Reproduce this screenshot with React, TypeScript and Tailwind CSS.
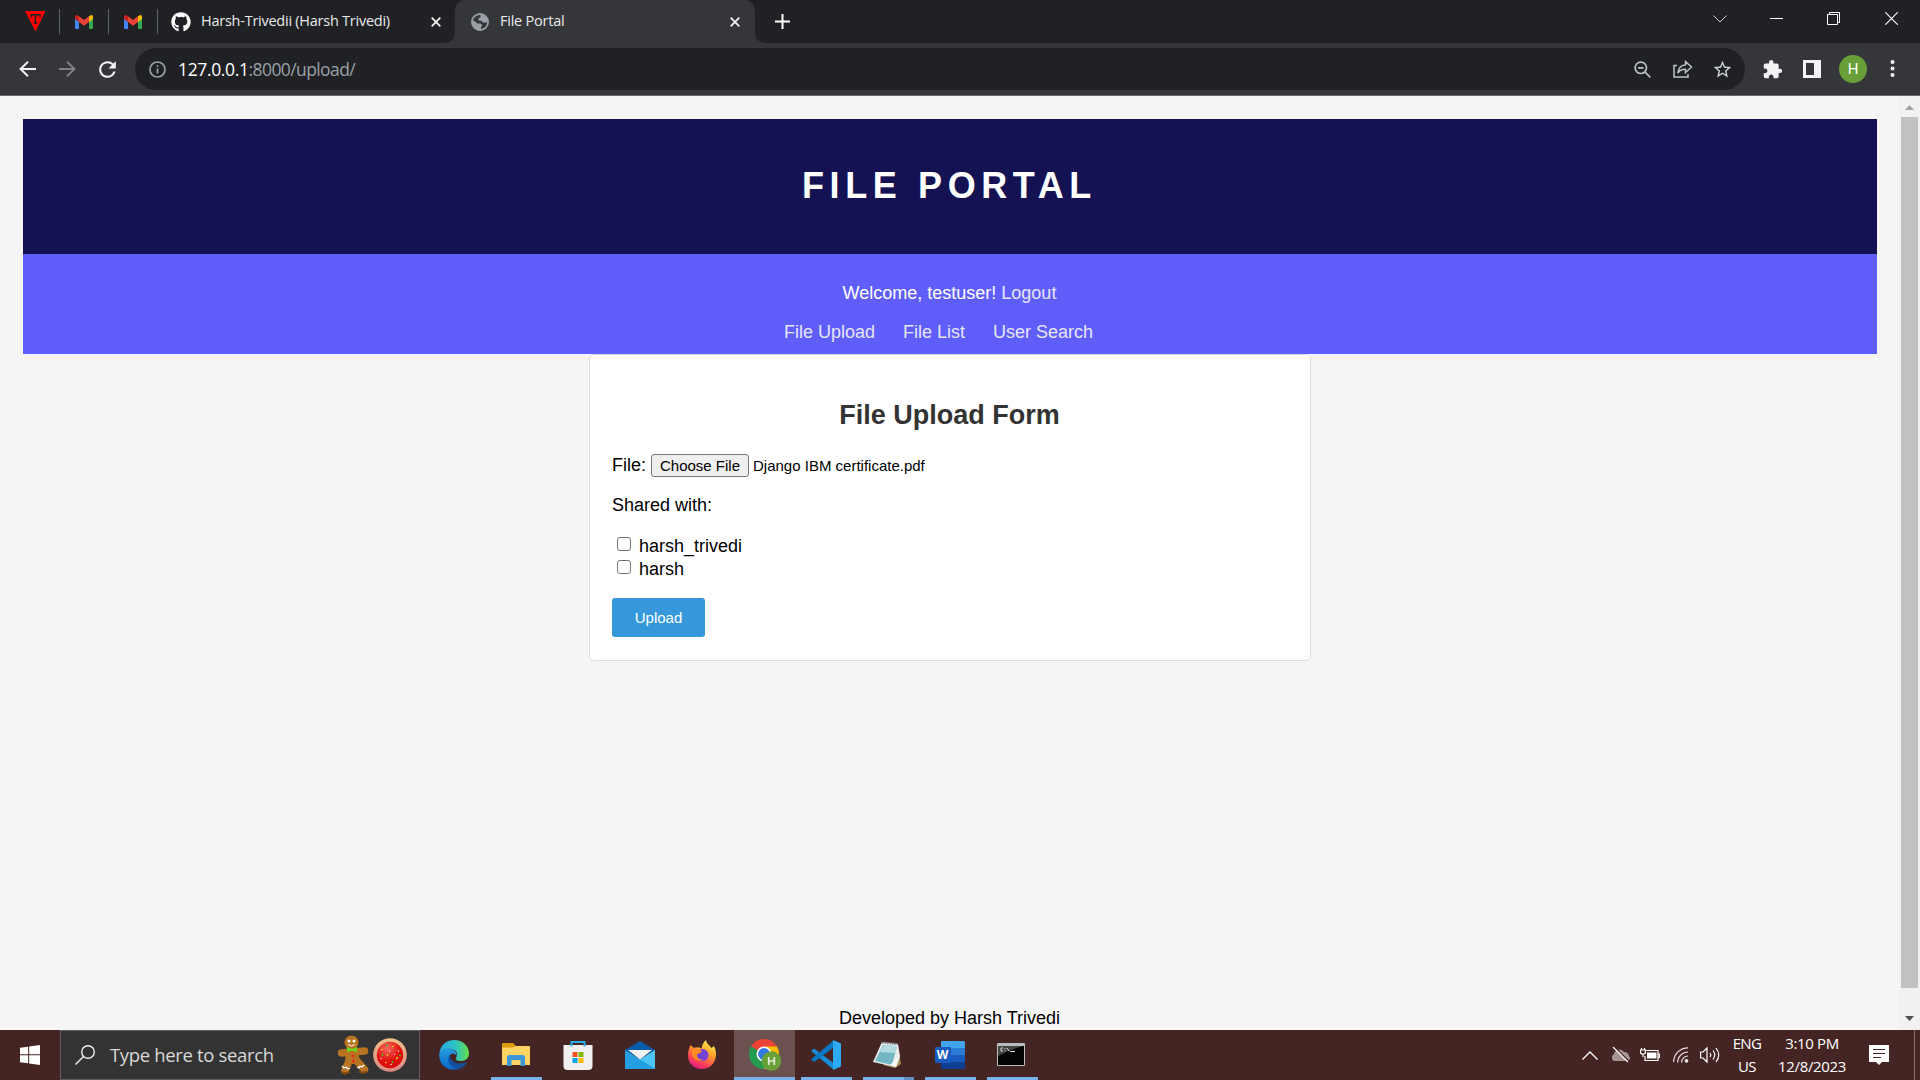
import React from "react";
import { FaGithub } from "react-icons/fa";
import { MdExtension, MdStarBorder, MdRefresh } from "react-icons/md";

function Divider() {
  return <div className="h-[25px] w-px bg-[#5f6368]" />;
}

function Gmail() {
  return (
    <svg width="18" height="14" viewBox="0 0 18 14">
      <path d="M0 3h4v11H1.3A1.3 1.3 0 0 1 0 12.700Z" fill="#4285f4" />
      <path d="M14 3h4v9.700A1.300 1.300 0 0 1 16.700 14H14Z" fill="#34a853" />
      <path d="M14 1.200 15.300.4C16.600-.5 18 .4 18 1.900V4l-4 3Z" fill="#fbbc04" />
      <path d="M4 1.200 9 5l5-3.800V7L9 10.700 4 7Z" fill="#ea4335" />
      <path d="M0 1.900C0 .4 1.400-.5 2.700.4L4 1.200V7L0 4Z" fill="#c5221f" />
    </svg>
  );
}

function Globe() {
  return (
    <svg width="18" height="18" viewBox="0 0 18 18">
      <circle cx="9" cy="9" r="9" fill="#9aa0a6" />
      <path d="M2 7.500C2.500 5 4.500 2.800 7 2.200L9.500 2v2.200L7.500 5.500v2l3 .2 1.500 1.800h4.200c-.3 3.300-2.700 6-6.200 6.600v-2l1.500-1.800-2-1.800H6.300L4.500 8.800Z" fill="#35363a" />
      <path d="M2 9.500 5.500 12v1.500L7.500 16C4.500 15.400 2.200 13 2 9.500Z" fill="#9aa0a6" />
    </svg>
  );
}

function Cross() {
  return (
    <svg width="10" height="10" viewBox="0 0 10 10" stroke="#f1f1f1" strokeWidth="1.8">
      <path d="M.7.7l8.600 8.600M9.300.7.7 9.300" />
    </svg>
  );
}

function TabStrip() {
  return (
    <div className="flex h-[43px] bg-[#202124] text-[14.500px] text-[#e8eaed]">
      <div className="flex h-[43px] w-[445px] items-center pr-[4px]">
        <div className="flex w-[59px] items-center pl-[25px]">
          <svg width="21" height="21" viewBox="0 0 21 21">
            <path d="M0 0h20.500L10.500 20.500Z" fill="#f00" />
            <path d="M6 3.800h9v2.500M6 3.800v2.500M10.500 4v8M8.700 12h3.600" stroke="#202124" strokeWidth="1.500" fill="none" />
          </svg>
        </div>
        <Divider />
        <div className="flex w-[48px] justify-center"><Gmail /></div>
        <Divider />
        <div className="flex w-[48px] justify-center"><Gmail /></div>
        <Divider />
        <FaGithub className="ml-[13px] size-[20px] text-white" />
        <span className="mb-[2px] ml-[10px] whitespace-nowrap tracking-[-0.25px]">Harsh-Trivedii (Harsh Trivedi)</span>
        <span className="ml-auto"><Cross /></span>
      </div>
      <div className="flex h-[43px] w-[10px] bg-[#35363a]"><div className="h-full w-full rounded-br-[10px] bg-[#202124]" /></div>
      <div className="flex h-[43px] w-[300px] items-center rounded-t-[10px] bg-[#35363a] pr-[15px] pl-[16px]">
        <Globe />
        <span className="mb-[2px] ml-[11px] tracking-[-0.23px]">File Portal</span>
        <span className="ml-auto"><Cross /></span>
      </div>
      <div className="flex h-[43px] w-[10px] bg-[#35363a]"><div className="h-full w-full rounded-bl-[10px] bg-[#202124]" /></div>
      <div className="flex flex-1 items-center pl-[10px]">
        <svg width="15" height="15" viewBox="0 0 15 15" stroke="#fff" strokeWidth="2"><path d="M7.500 0v15M0 7.500h15" /></svg>
      </div>
      <div className="flex h-[37px] items-center">
        <svg width="14" height="8" viewBox="0 0 14 8" stroke="#d0d0d0" fill="none"><path d="m.5.5 6.500 6.500L13.500.5" /></svg>
        <div className="ml-[43px] h-px w-[13px] bg-white" />
        <svg className="ml-[44px]" width="13" height="13" viewBox="0 0 13 13" stroke="#fff" fill="none"><path d="M.5 2.500h10v10H.5ZM2.500 2.500v-2h10v10h-2" /></svg>
        <svg className="mr-[22px] ml-[45px]" width="13" height="13" viewBox="0 0 13 13" stroke="#fff" strokeWidth="1.100"><path d="m.3.300 12.400 12.400M12.700.3.3 12.700" /></svg>
      </div>
    </div>
  );
}

function Toolbar() {
  return (
    <div className="flex h-[53px] items-center border-b border-[#67686b] bg-[#35363a]">
      <svg className="ml-[19px]" width="17" height="16" viewBox="0 0 17 16" stroke="#f1f3f4" strokeWidth="1.900" fill="none"><path d="M17 8H1.500M9 .7 1.500 8 9 15.300" /></svg>
      <svg className="ml-[23px]" width="17" height="16" viewBox="0 0 17 16" stroke="#7f8083" strokeWidth="1.900" fill="none"><path d="M0 8h15.500M8 .7 15.500 8 8 15.300" /></svg>
      <MdRefresh className="ml-[19px] size-[25px] text-[#f1f3f4]" />
      <div className="ml-[15px] flex h-[42px] w-[1610px] items-center rounded-full bg-[#202124] pr-[12px] pl-[14px]">
        <svg width="17" height="17" viewBox="0 0 17 17" stroke="#9aa0a6" fill="none" strokeWidth="1.700"><circle cx="8.500" cy="8.500" r="7.500" /><path d="M8.500 7.500v5M8.500 4.200v1.800" /></svg>
        <span className="ml-[12px] text-[17.500px] tracking-[-0.600px] text-[#9aa0a6]"><span className="tracking-[-0.360px] text-white">127.0.0.1</span>:8000/upload/</span>
        <svg className="ml-auto" width="17" height="17" viewBox="0 0 17 17" stroke="#bdc1c6" fill="none" strokeWidth="1.700"><circle cx="6.800" cy="6.800" r="5.700" /><path d="m11 11 5.300 5.300M4 6.800h5.600" /></svg>
        <svg className="ml-[22px]" width="20" height="18" viewBox="0 0 20 18" stroke="#bdc1c6" fill="none" strokeWidth="1.500"><path d="M4 5.500H1V17h14v-3M12.500 1.500l6 5.500-6 5.500V9.300C9 9.200 6.500 10.500 4.800 13c.5-4.300 3-7.500 7.700-8.200Z" /></svg>
        <MdStarBorder className="ml-[19px] size-[21px] text-[#d0d3d6]" />
      </div>
      <MdExtension className="ml-[17px] size-[21px] text-[#f1f3f4]" />
      <svg className="ml-[20px]" width="18" height="18" viewBox="0 0 18 18"><path d="M0 0h18v18H0ZM3 3v12h8V3Z" fill="#f1f3f4" fillRule="evenodd" /></svg>
      <div className="ml-[18px] flex size-[28px] items-center justify-center rounded-full bg-[#689f38] font-[Roboto] text-[15px] text-white">H</div>
      <svg className="ml-[23px]" width="5" height="18" viewBox="0 0 5 18" fill="#f1f3f4"><circle cx="2.500" cy="2" r="2" /><circle cx="2.500" cy="8.500" r="2" /><circle cx="2.500" cy="15" r="2" /></svg>
    </div>
  );
}

function CheckRow({ name }: { name: string }) {
  return (
    <div className="flex h-[23px] items-center">
      <span className="mb-[5px] ml-[5px] size-[14px] rounded-[3px] border border-[#767676] bg-white" />
      <span className="ml-[8px]">{name}</span>
    </div>
  );
}

function Page() {
  return (
    <div className="flex h-[934px] overflow-hidden bg-[#f5f5f5] font-['Liberation_Sans',Arial,sans-serif] text-[18px] leading-[21px] text-black">
      <main className="flex w-[1899px] flex-col items-center pt-[23px]">
        <header className="flex h-[135px] w-[1854px] justify-center self-start bg-[#141252] pt-[46px] ml-[23px]">
          <h1 className="mr-px text-[36px] leading-[42px] font-bold tracking-[5.600px] text-white">FILE PORTAL</h1>
        </header>
        <nav className="ml-[23px] flex h-[100px] w-[1854px] flex-col items-center self-start bg-[#605efa] pt-[29px] text-[#e6e6fa]">
          <p className="mr-px"><span className="text-white">Welcome, testuser!</span> Logout</p>
          <div className="mt-[18px] mr-[23px] flex gap-[28px]"><a>File Upload</a><a>File List</a><a>User Search</a></div>
        </nav>
        <section className="ml-px h-[307px] w-[722px] rounded-[5px] border border-[#ddd] bg-white px-[22px] pt-[45px]">
          <h2 className="mr-px text-center text-[27px] leading-[31px] font-bold text-[#333]">File Upload Form</h2>
          <div className="mt-[23px] flex h-[23px] items-center">
            <span>File:</span>
            <button className="ml-[5px] h-[23px] w-[98px] rounded-[3px] border border-[#767676] bg-[#efefef] text-[15px] leading-[21px]">Choose File</button>
            <span className="ml-[4px] text-[15px]">Django IBM certificate.pdf</span>
          </div>
          <p className="mt-[18px]">Shared with:</p>
          <div className="mt-[19px]"><CheckRow name="harsh_trivedi" /><CheckRow name="harsh" /></div>
          <button className="mt-[17px] h-[39px] w-[93px] rounded-[3px] bg-[#3498db] text-[15px] text-white">Upload</button>
        </section>
        <footer className="mt-auto h-[22px] leading-[21px]">Developed by Harsh Trivedi</footer>
      </main>
      <div className="flex w-[21px] flex-col items-center bg-[#f1f1f1]">
        <div className="flex h-[21px] items-center pt-[2px]"><svg width="9" height="5" viewBox="0 0 9 5"><path d="M0 5 4.500 0 9 5Z" fill="#a3a3a3" /></svg></div>
        <div className="h-[871px] w-[17px] bg-[#c1c1c1]" />
        <div className="mt-auto flex h-[21px] items-center pb-[2px]"><svg width="9" height="5" viewBox="0 0 9 5"><path d="M0 0h9L4.500 5Z" fill="#505050" /></svg></div>
      </div>
    </div>
  );
}

function Gingerbread() {
  return (
    <svg width="32" height="41" viewBox="0 0 32 41">
      <g stroke="#b87420" strokeLinecap="round" strokeWidth="7.500">
        <path d="M4.500 18 27.500 16M12 26 8 35.500M20 26l7.500 8.500" />
      </g>
      <circle cx="14.500" cy="7.500" r="7" fill="#b87420" />
      <path d="M9 14h12l2 15H8Z" fill="#b87420" />
      <circle cx="12" cy="6" r="1.500" fill="#fff" /><circle cx="17" cy="6" r="1.500" fill="#fff" />
      <path d="M11 9.500q3.500 3 7 0" stroke="#fff" fill="none" />
      <path d="m10 12 5 2 5-2v5l-5-1.500-5 1.500Z" fill="#64dd17" />
      <circle cx="16" cy="21" r="1.500" fill="#e53020" /><circle cx="16.500" cy="26" r="1.500" fill="#e53020" />
      <path d="m5 31 2 2 2-1 2 2 2-1M20 32l2 1 1-2 2 1 2-2" stroke="#fff" strokeWidth="1.300" fill="none" />
      <path d="M5 37.500q4 2 8-1M22 36.500q4 2 8 0" stroke="#85480d" strokeWidth="2" fill="none" />
    </svg>
  );
}

function Cookie() {
  return (
    <svg width="34" height="34" viewBox="0 0 34 34">
      <defs>
        <linearGradient id="rim" x2="0" y2="1"><stop stopColor="#efc088" /><stop offset="1" stopColor="#d98984" /></linearGradient>
        <radialGradient id="icing" cx=".4" cy=".25"><stop stopColor="#f76a60" /><stop offset="1" stopColor="#dd0d0b" /></radialGradient>
      </defs>
      <circle cx="17" cy="17" r="16.800" fill="url(#rim)" />
      <circle cx="17" cy="17" r="13.200" fill="url(#icing)" />
      <path d="m13 7 2 1M9 16l1 2M26 17l2 1M19 23l1 2" stroke="#2bcc25" strokeWidth="1.300" />
      <path d="m21 8-2 1M8 12l2-1M14 18l1-2M23 21l2-2M12 25l2-1" stroke="#ffc928" strokeWidth="1.200" />
      <path d="m16 12 1 2M7 20l2 1M17 27l2-1M25 12l1 2M22 16l-1 1" stroke="#ffc1c1" strokeWidth="1" />
    </svg>
  );
}

function Edge() {
  return (
    <svg width="30" height="30" viewBox="0 0 30 30">
      <defs>
        <linearGradient id="e1" x1="0" x2="1"><stop stopColor="#25a8df" /><stop offset=".55" stopColor="#2cc3c5" /><stop offset="1" stopColor="#67df45" /></linearGradient>
        <linearGradient id="e2" x2="0" y2="1"><stop stopColor="#259bdf" /><stop offset="1" stopColor="#0a67c9" /></linearGradient>
      </defs>
      <path d="M.5 13C1.500 5 7.500 0 15 0c9 0 15 6 15 13.500 0 5-3.800 7.500-8 7.500-4 0-6-1.500-5-3 2-3 1.500-7-3-8.500C9 8 3 9 .5 13Z" fill="url(#e1)" />
      <path d="M.3 13C3 8.500 9 7.500 13.500 9.500c3 1.300 4.500 4 4 6.500-1-2.500-4.200-3.500-6-1.500-3 3.200-2.500 12 8.500 14.500C10 32-1 26 .3 13Z" fill="url(#e2)" />
      <path d="M11 14.500C7 20 10.500 26 18 29.500c4-.7 7.500-3.300 9.500-6.500.4-.8-.2-1-1-.6C18.500 25.500 11 21.500 11 14.500Z" fill="#124f9c" />
    </svg>
  );
}

function Explorer() {
  return (
    <svg width="28" height="24" viewBox="0 0 28 24">
      <path d="M0 1a1 1 0 0 1 1-1h10l2.500 2.500V8H0Z" fill="#dc9c05" />
      <path d="M0 4.500h11L14 3h13a1 1 0 0 1 1 1v18H0Z" fill="#ffd466" />
      <path d="M5 23V14.500A2.500 2.500 0 0 1 7.500 12h13a2.500 2.500 0 0 1 2.500 2.500V23h-4.500v-6h-9v6Z" fill="#3c96d5" />
    </svg>
  );
}

function Store() {
  return (
    <svg width="30" height="30" viewBox="0 0 30 30" className="mr-px">
      <path d="M.5 5h29v21q0 4-4 4h-21q-4 0-4-4Z" fill="#f0f0f0" />
      <path d="M8.500 6.500V2h13v4.500" fill="none" stroke="#25aee7" strokeWidth="2" />
      <path d="M9.500 12h5v5h-5Z" fill="#f25022" /><path d="M15.500 12h5v5h-5Z" fill="#7fba00" />
      <path d="M9.500 18h5v5h-5Z" fill="#00a4ef" /><path d="M15.500 18h5v5h-5Z" fill="#ffb900" />
    </svg>
  );
}

function Mail() {
  return (
    <svg width="30" height="28" viewBox="0 0 30 28">
      <path d="M0 9 15 0l15 9-15 8Z" fill="#075bab" />
      <path d="M0 9l15 9.500L30 9v19H0Z" fill="#24a7ea" />
      <path d="m15 18.500 15 9.500V9Z" fill="#4ec4f5" /><path d="M0 28V9l15 9.500L30 28Z" fill="#24a0e2" />
      <path d="M3 9h24L15 18.500Z" fill="#f1f1f1" />
    </svg>
  );
}

function Firefox() {
  return (
    <svg width="30" height="30" viewBox="0 0 30 30">
      <defs><linearGradient id="fx" x1=".75" x2=".25" y2="1"><stop stopColor="#fff44f" /><stop offset=".4" stopColor="#ff9a28" /><stop offset=".75" stopColor="#fb405a" /><stop offset="1" stopColor="#dc1590" /></linearGradient></defs>
      <path d="M3.500 5 7 8c2-1 5-1 7.500.5C15 5 16.500 2 19 0c.5 4 3.500 5 5.500 8L27 6c2 4 2.500 8 1.500 12C27 25 21.500 29 15 29 6.500 29 1 23 1 15.500c0-4 1-7 2.500-10.500Z" fill="url(#fx)" />
      <circle cx="15.500" cy="15" r="6" fill="#7542d6" />
      <path d="M5 10q5-2 10 1c-1 2-4 2.500-5 3.500 0 4 3 5.500 6 5-4 3-10 0-11-5Z" fill="#ff8a20" />
    </svg>
  );
}

function Chrome() {
  return (
    <svg width="32" height="32" viewBox="0 0 32 32">
      <path d="M15 15 2 7.500A15 15 0 0 1 28 7.500Z" fill="#ea4335" />
      <path d="M15 15 2 7.500A15 15 0 0 0 15 30l7-11Z" fill="#249b50" />
      <path d="M15 7.500h13A15 15 0 0 1 15 30l6.500-11Z" fill="#fbbc04" />
      <circle cx="15" cy="15" r="7.500" fill="#fff" /><circle cx="15" cy="15" r="5.900" fill="#3478e8" />
      <circle cx="22.500" cy="22" r="9.800" fill="#689f38" />
      <path d="M19.700 18v8M25.300 18v8M19.700 22h5.600" stroke="#e6eedf" strokeWidth="1.700" />
    </svg>
  );
}

function Code() {
  return (
    <svg width="30" height="30" viewBox="0 0 30 30">
      <path d="M0 11 3 8.500 22.500 23v6.500Z" fill="#168bd8" />
      <path d="M0 19.500 3 22 22.500 7.500V.5Z" fill="#0878c4" />
      <path d="m22 0 8 3.500v23L22 30Z" fill="#2daaf2" />
    </svg>
  );
}

function Notepad() {
  return (
    <svg width="29" height="28" viewBox="0 0 29 28" className="mr-[2px]">
      <path d="m24 3 4 20-6 4-12-3Z" fill="#a8935f" />
      <path d="M9 1 25 3l2 12-4 11L0 21Z" fill="#e9edec" />
      <path d="m10 4 14 1-5 19L2 20Z" fill="#73b7c3" />
      <path d="m11 4 13 1-2 7L7 11Z" fill="#b3dce2" />
      <path d="M9 1.500 25 3" stroke="#777" strokeWidth="2" strokeDasharray="1.500 1" />
      <path d="m17 24 10-9-4 11Z" fill="#f8f8f8" />
    </svg>
  );
}

function Word() {
  return (
    <div className="relative mr-px flex h-[28px] w-[30px] justify-end">
      <svg width="24" height="28" viewBox="0 0 24 28"><path d="M1 0h22l1 1v6H0V1Z" fill="#41a5ee" /><path d="M0 7h24v7H0Z" fill="#2b7cd3" /><path d="M0 14h24v7H0Z" fill="#185abd" /><path d="M0 21h24v6l-1 1H1l-1-1Z" fill="#103f91" /></svg>
      <span className="absolute top-[6px] left-0 flex size-[16px] items-center justify-center rounded-[1px] bg-[#185abd] font-['Open_Sans'] text-[12px] font-bold text-white">W</span>
    </div>
  );
}

function Terminal() {
  return (
    <svg width="28" height="23" viewBox="0 0 28 23" className="mr-[2px] mb-[2px]">
      <path d="M.5.500h27v22H.5Z" fill="#050505" stroke="#b8bdc0" />
      <path d="M1 1h26v2H1Z" fill="#b8bdc0" />
      <path d="M1 3h25Q14 6 1 13Z" fill="#454545" />
      <path d="M6 5H4v3h2M8 5v1M8 7v1M10 5l2 3M13 8.500h5" stroke="#ddd" fill="none" />
    </svg>
  );
}

const apps = [
  { icon: <Edge />, bar: "" },
  { icon: <Explorer />, bar: "w-[51px]" },
  { icon: <Store />, bar: "" },
  { icon: <Mail />, bar: "" },
  { icon: <Firefox />, bar: "" },
  { icon: <Chrome />, bar: "w-[61px]", active: true },
  { icon: <Code />, bar: "w-[51px]" },
  { icon: <Notepad />, bar: "w-[51px] border-r-[10px] border-[#5f8fbf]" },
  { icon: <Word />, bar: "w-[51px]" },
  { icon: <Terminal />, bar: "w-[51px]" },
];

function Taskbar() {
  return (
    <div className="flex h-[50px] bg-[#442523]">
      <div className="flex w-[60px] items-center justify-center">
        <svg width="20" height="20" viewBox="0 0 20 20" fill="#fff"><path d="M0 2.800 8.200 1.700v7.600H0ZM9.200 1.500 20 0v9.300H9.200ZM0 10.300h8.200v8L0 17.200ZM9.200 10.300H20V20L9.200 18.500Z" /></svg>
      </div>
      <div className="flex w-[360px] items-center border border-[#5f5f5f] bg-[#333] pl-[14px]">
        <svg width="20" height="20" viewBox="0 0 20 20" stroke="#eee" fill="none" strokeWidth="1.400"><circle cx="13" cy="7" r="6.300" /><path d="M8.500 11.500.5 19.500" /></svg>
        <span className="ml-[15px] text-[18.500px] tracking-[-0.340px] whitespace-nowrap text-[#d8d8d8]">Type here to search</span>
        <span className="ml-auto"><Gingerbread /></span>
        <span className="mr-[12px] ml-[4px]"><Cookie /></span>
      </div>
      <div className="ml-[3px] flex">
        {apps.map((a, i) => (
          <div key={i} className={a.active ? "relative ml-px flex w-[61px] items-center justify-center bg-[#6b5150]" : "relative flex w-[62px] items-center justify-center"}>
            {a.icon}
            {a.bar && <div className="absolute inset-x-0 bottom-0 flex justify-center"><div className={"h-[3px] bg-[#76b3ee] " + a.bar} /></div>}
          </div>
        ))}
      </div>
      <div className="ml-auto flex items-center text-white">
        <svg width="16" height="9" viewBox="0 0 16 9" stroke="#fff" fill="none" strokeWidth="1.300"><path d="m.5 8.500 7.500-7.500 7.500 7.500" /></svg>
        <svg className="ml-[12px]" width="21" height="16" viewBox="0 0 21 16"><path d="M4 14a4 4 0 0 1 0-7 5.500 5.500 0 0 1 10-2 4.500 4.500 0 0 1 5 4 3 3 0 0 1-1 5Z" fill="#a69594" /><path d="m4.500 0 15 15" stroke="#442523" strokeWidth="1.500" /><path d="m3 0 15 15" stroke="#fff" strokeWidth="1.200" /></svg>
        <svg className="ml-[9px]" width="20" height="14" viewBox="0 0 20 14" stroke="#fff" fill="none" strokeWidth="1.200"><path d="M6.500 2.500h11.500v10H5V8M18 6h1.500v3.500H18M1.500 0v2M4.500 0v2M.5 2h5v2.500Q5.500 6 3 6T.5 4.500ZM3 6v3" /><path d="M7 4.500h9.500v6H7Z" fill="#fff" stroke="none" /></svg>
        <svg className="ml-[13px]" width="16" height="16" viewBox="0 0 16 16" stroke="#e9dfdf" fill="none" strokeWidth="1.200"><path d="M.6 15A14.400 14.400 0 0 1 15 .8M4.600 15.500A10.500 10.500 0 0 1 15 5M8.600 15.500A6.500 6.500 0 0 1 15 9" /><circle cx="13.500" cy="13.800" r="1.300" fill="#fff" /></svg>
        <svg className="ml-[11px]" width="21" height="18" viewBox="0 0 21 18" stroke="#fff" fill="none" strokeWidth="1.200"><path d="M.6 6H3l4-4v14l-4-4H.6ZM10 7q1.500 2 0 4M13 4.500q3.500 4.500 0 9M16 2q5.500 7 0 14" /></svg>
        <div className="ml-[7px] w-[38px] text-center text-[15px] leading-[23px] tracking-[-0.600px]">ENG<br />US</div>
        <div className="ml-[8px] w-[76px] text-center text-[15px] leading-[23px] tracking-[-0.360px] whitespace-nowrap">3:10 PM<br />12/8/2023</div>
        <svg className="ml-[19px]" width="20" height="20" viewBox="0 0 20 20"><path d="M0 0h20v17h-7l-3 3-3-3H0Z" fill="#fff" /><path d="M4 4.500h12M4 8.500h12M4 12.500h8" stroke="#442523" strokeWidth="1.200" /></svg>
        <div className="mr-[5px] ml-[25px] h-[50px] w-px bg-[#836e6c]" />
      </div>
    </div>
  );
}

export default function App() {
  return (
    <div className="h-[1080px] w-[1920px] overflow-hidden font-['Open_Sans','Noto_Sans',sans-serif]">
      <TabStrip />
      <Toolbar />
      <Page />
      <Taskbar />
    </div>
  );
}
